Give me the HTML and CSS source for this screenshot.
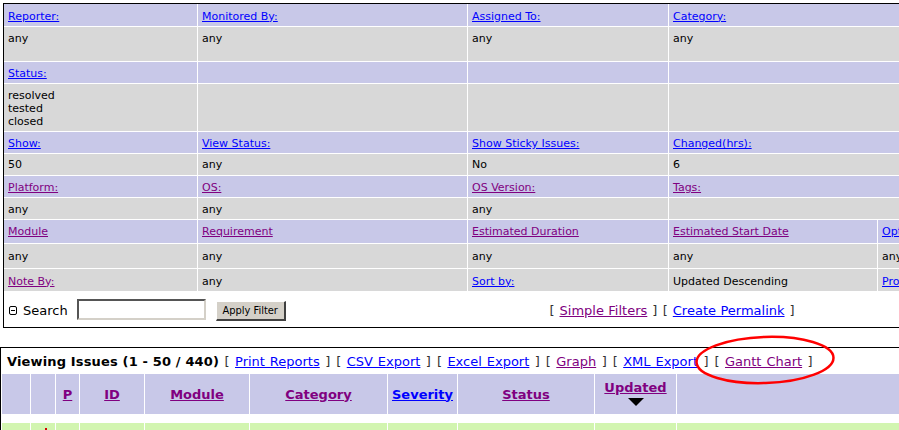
FILE: index.html
```html
<!DOCTYPE html>
<html>
<head>
<meta charset="utf-8">
<title>View Issues</title>
<link rel="stylesheet" href="styles.css">
</head>
<body>
<div class="filter-box">
  <table class="filter">
    <colgroup>
      <col class="c1"><col class="c2"><col class="c3"><col class="c4"><col class="c5">
    </colgroup>
    <tr class="hd h23 dn">
      <td><a href="#">Reporter:</a></td>
      <td><a href="#">Monitored By:</a></td>
      <td><a href="#">Assigned To:</a></td>
      <td colspan="2"><a href="#">Category:</a></td>
    </tr>
    <tr class="val h35 top5">
      <td>any</td><td>any</td><td>any</td><td colspan="2">any</td>
    </tr>
    <tr class="hd h22 dn">
      <td><a href="#">Status:</a></td><td></td><td></td><td colspan="2"></td>
    </tr>
    <tr class="val h48 top5">
      <td>resolved<br>tested<br>closed</td><td></td><td></td><td colspan="2"></td>
    </tr>
    <tr class="hd h22 dn">
      <td><a href="#">Show:</a></td>
      <td><a href="#">View Status:</a></td>
      <td><a href="#">Show Sticky Issues:</a></td>
      <td colspan="2"><a href="#">Changed(hrs):</a></td>
    </tr>
    <tr class="val h22">
      <td>50</td><td>any</td><td>No</td><td colspan="2">6</td>
    </tr>
    <tr class="hd h22 dn">
      <td><a class="v" href="#">Platform:</a></td>
      <td><a class="v" href="#">OS:</a></td>
      <td><a class="v" href="#">OS Version:</a></td>
      <td colspan="2"><a class="v" href="#">Tags:</a></td>
    </tr>
    <tr class="val h22 dn">
      <td>any</td><td>any</td><td>any</td><td colspan="2"></td>
    </tr>
    <tr class="hd h24">
      <td><a class="v" href="#">Module</a></td>
      <td><a class="v" href="#">Requirement</a></td>
      <td><a class="v" href="#">Estimated Duration</a></td>
      <td><a class="v" href="#">Estimated Start Date</a></td>
      <td><a href="#">Optional Fields</a></td>
    </tr>
    <tr class="val h25">
      <td>any</td><td>any</td><td>any</td><td>any</td><td>any</td>
    </tr>
    <tr class="val h23 dn">
      <td><a class="v" href="#">Note By:</a></td>
      <td>any</td>
      <td><a href="#">Sort by:</a></td>
      <td>Updated Descending</td>
      <td><a href="#">Project:</a></td>
    </tr>
  </table>
  <div class="search-row">
    <div class="search-left">
      <svg class="collapse-icon" width="9" height="10" viewBox="0 0 9 10"><rect x="0.5" y="0.5" width="7" height="8" rx="1.5" fill="none" stroke="#000" stroke-width="1"/><line x1="2" y1="4.5" x2="6" y2="4.5" stroke="#000" stroke-width="1"/></svg>
      <span class="search-label">Search</span>
      <input class="search-input" type="text">
      <button class="apply-btn" type="button">Apply Filter</button>
    </div>
    <div class="search-links">
      <span class="br">[</span> <a class="v" href="#">Simple Filters</a> <span class="br">]</span> <span class="br">[</span> <a href="#">Create Permalink</a> <span class="br">]</span>
    </div>
  </div>
</div>

<div class="issues-box">
  <div class="issues-title">
    <b class="count">Viewing Issues (1 - 50 / 440)</b> <span class="br">[</span> <a href="#">Print Reports</a> <span class="br">]</span> <span class="br">[</span> <a href="#">CSV Export</a> <span class="br">]</span> <span class="br">[</span> <a href="#">Excel Export</a> <span class="br">]</span> <span class="br">[</span> <a class="v" href="#">Graph</a> <span class="br">]</span> <span class="br">[</span> <a href="#">XML Export</a> <span class="br">]</span> <span class="br">[</span> <a class="v" href="#">Gantt Chart</a> <span class="br">]</span>
  </div>
  <table class="issues">
    <colgroup>
      <col class="k1"><col class="k2"><col class="k3"><col class="k4"><col class="k5"><col class="k6"><col class="k7"><col class="k8"><col class="k9"><col class="k10">
    </colgroup>
    <tr class="ihead">
      <td></td>
      <td></td>
      <td><a class="v" href="#">P</a></td>
      <td><a class="v" href="#">ID</a></td>
      <td><a class="v" href="#">Module</a></td>
      <td><a class="v" href="#">Category</a></td>
      <td><a href="#">Severity</a></td>
      <td><a class="v" href="#">Status</a></td>
      <td class="sorted"><a class="v" href="#">Updated</a><svg class="sort-arrow" width="16" height="8" viewBox="0 0 16 8"><polygon points="0,0 16,0 8,8" fill="#000"/></svg></td>
      <td></td>
    </tr>
    <tr class="spacer"><td colspan="10"></td></tr>
    <tr class="irow">
      <td></td>
      <td class="prio"><svg width="6" height="10" viewBox="0 0 6 10"><rect x="1" y="0" width="2" height="10" fill="#d40000"/></svg></td>
      <td></td><td></td><td></td><td></td><td></td><td></td><td></td><td></td>
    </tr>
  </table>
</div>

<svg class="highlight" width="150" height="60" viewBox="0 0 150 60">
  <ellipse cx="72" cy="27" rx="68.5" ry="23" fill="none" stroke="#ff0000" stroke-width="2.5" transform="rotate(-2 72 27)"/>
</svg>
</body>
</html>
```
FILE: styles.css
```css
html {
  overflow: hidden;
}
body {
  margin: 0;
  background: #fff;
  color: #000;
  font-family: "DejaVu Sans", Verdana, sans-serif;
  font-size: 13px;
}
a {
  color: #0000ff;
  text-decoration: underline;
}
a.v {
  color: #800080;
}
.br {
  color: #333;
  padding: 0 0.5px;
}

/* ---------- filter box ---------- */
.filter-box {
  margin: 3px 0 0 3px;
  border: 1px solid #000;
  width: 1100px;
}
.filter {
  border-collapse: separate;
  border-spacing: 0;
  table-layout: fixed;
  width: 1100px;
  font-size: 11px;
  line-height: 13px;
}
.filter .c1 { width: 194px; }
.filter .c2 { width: 270px; }
.filter .c3 { width: 201px; }
.filter .c4 { width: 209px; }
.filter .c5 { width: 226px; }
.filter td {
  box-sizing: border-box;
  border-right: 1px solid #fff;
  border-bottom: 1px solid #fff;
  padding: 0 4px;
  vertical-align: middle;
  white-space: nowrap;
  overflow: hidden;
}
.filter tr.hd td { background: #c8c8e8; }
.filter tr.val td { background: #d8d8d8; }
.filter tr.h22 td { height: 22px; }
.filter tr.h23 td { height: 23px; }
.filter tr.h24 td { height: 24px; }
.filter tr.h25 td { height: 25px; }
.filter tr.h35 td { height: 35px; }
.filter tr.h48 td { height: 48px; }
.filter tr.dn td { padding-top: 2px; }
.filter tr.top5 td { vertical-align: top; padding-top: 5px; }

.search-row {
  display: flex;
  align-items: center;
  height: 35px;
  padding-left: 5px;
}
.search-left {
  display: flex;
  align-items: center;
  width: 540px;
  flex: 0 0 540px;
}
.collapse-icon {
  display: block;
  margin-top: 3px;
}
.search-label {
  margin-left: 5px;
  font-size: 13px;
  padding-top: 2px;
}
.search-input {
  box-sizing: border-box;
  width: 129px;
  height: 21px;
  margin: 0 0 0 9px;
  padding: 0;
  border-style: solid;
  border-width: 2px;
  border-color: #555 #d4d0c8 #d4d0c8 #555;
  background: #fff;
}
.apply-btn {
  box-sizing: border-box;
  width: 70px;
  height: 20px;
  margin: 3px 0 0 10px;
  padding: 0;
  background: #d4d0c8;
  border-style: solid;
  border-width: 1px 2px 2px 1px;
  border-color: #fff #404040 #404040 #fff;
  font-family: "DejaVu Sans Condensed", Tahoma, sans-serif;
  font-size: 11px;
  color: #000;
}
.search-links {
  white-space: nowrap;
  padding-top: 2px;
  word-spacing: 0.3px;
}

/* ---------- issues box ---------- */
.issues-box {
  margin-top: 19px;
  border: 1px solid #000;
  width: 1000px;
}
.issues-title {
  height: 23px;
  padding: 2px 0 0 6px;
  line-height: 23px;
  white-space: nowrap;
  word-spacing: 0.8px;
}
.issues-title .count {
  letter-spacing: 0.15px;
  word-spacing: 0;
}
.issues {
  border-collapse: separate;
  border-spacing: 1px;
  table-layout: fixed;
  width: 998px;
}
.issues .k1 { width: 28px; }
.issues .k2 { width: 24px; }
.issues .k3 { width: 23px; }
.issues .k4 { width: 64px; }
.issues .k5 { width: 104px; }
.issues .k6 { width: 137px; }
.issues .k7 { width: 69px; }
.issues .k8 { width: 136px; }
.issues .k9 { width: 81px; }
.issues .k10 { width: 321px; }
.issues td {
  padding: 0;
}
.ihead td {
  height: 40px;
  background: #c8c8e8;
  text-align: center;
  vertical-align: middle;
  font-weight: bold;
}
.ihead td.sorted {
  vertical-align: top;
  padding-top: 6px;
  box-sizing: border-box;
  line-height: 15px;
}
.sort-arrow {
  display: block;
  margin: 3px auto 0;
}
.spacer td {
  height: 7px;
  background: #fff;
}
.irow td {
  height: 24px;
  background: #d2f5b0;
  vertical-align: top;
}
.irow td.prio {
  padding: 5px 0 0 13px;
}
.irow td.prio svg {
  display: block;
}

.highlight {
  position: absolute;
  left: 693px;
  top: 333px;
}
```
